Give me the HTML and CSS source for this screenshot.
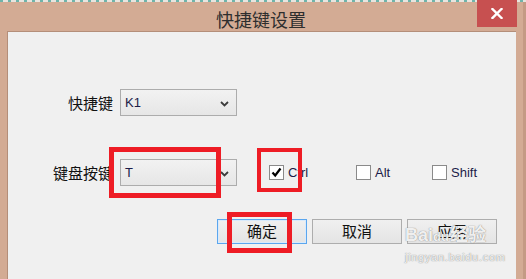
FILE: index.html
```html
<!DOCTYPE html>
<html lang="zh-CN">
<head>
<meta charset="utf-8">
<title>快捷键设置</title>
<link rel="stylesheet" href="styles.css">
</head>
<body>
<div class="window">
  <div class="titlebar">
    <div class="title">快捷键设置</div>
    <div class="close">
      <svg width="12" height="11" viewBox="0 0 12 11"><path d="M1.5 1 L10.5 10 M10.5 1 L1.5 10" stroke="#fff" stroke-width="2.4" stroke-linecap="square"/></svg>
    </div>
  </div>
  <div class="client">
    <div class="row row1">
      <div class="label">快捷键</div>
      <div class="combo"><span class="val">K1</span>
        <svg class="chev" width="9" height="6" viewBox="0 0 9 6"><path d="M1 1 L4.5 4.5 L8 1" fill="none" stroke="#3c3c3c" stroke-width="1.8"/></svg>
      </div>
    </div>
    <div class="row row2">
      <div class="label">键盘按键</div>
      <div class="combo"><span class="val">T</span>
        <svg class="chev" width="9" height="6" viewBox="0 0 9 6"><path d="M1 1 L4.5 4.5 L8 1" fill="none" stroke="#3c3c3c" stroke-width="1.8"/></svg>
      </div>
      <div class="checks">
        <div class="check c-ctrl"><span class="box"><svg width="13" height="13" viewBox="0 0 13 13"><path d="M2.5 6.5 L5.2 9.5 L10.5 2.5" fill="none" stroke="#000" stroke-width="2.2"/></svg></span><span class="ctext">Ctrl</span></div>
        <div class="check c-alt"><span class="box"></span><span class="ctext">Alt</span></div>
        <div class="check"><span class="box"></span><span class="ctext">Shift</span></div>
      </div>
    </div>
    <div class="buttons">
      <div class="btn default">确定</div>
      <div class="btn">取消</div>
      <div class="btn">应用</div>
    </div>
    <div class="mark m1"></div>
    <div class="mark m2"></div>
    <div class="mark m3"></div>
    <div class="watermark">
      <div class="wm1">Bai<span class="paw">du</span>经验</div>
      <div class="wm2">jingyan.baidu.com</div>
    </div>
  </div>
</div>
</body>
</html>
```
FILE: styles.css
```css
html, body {
  margin: 0;
  padding: 0;
}
body {
  width: 526px;
  height: 279px;
  overflow: hidden;
  background: #d3ab94;
  font-family: "Noto Sans CJK SC", "Liberation Sans", sans-serif;
}
.window {
  display: flex;
  flex-direction: column;
  width: 526px;
  height: 279px;
  background: linear-gradient(to left, #c49a84 0, #c49a84 3px, transparent 3px);
}
.titlebar {
  height: 37px;
  display: grid;
  grid-template-columns: 1fr auto 1fr;
  background-image: repeating-linear-gradient(to right, #6fb4aa 0, #6fb4aa 3px, #e9e4df 3px, #e9e4df 8px);
  background-size: 100% 2px;
  background-repeat: no-repeat;
}
.title {
  grid-column: 2;
  align-self: start;
  margin-top: 7px;
  font-size: 18px;
  line-height: 24px;
  color: #2e2e2e;
  margin-left: -4px;
}
.close {
  grid-column: 3;
  justify-self: end;
  align-self: start;
  width: 40px;
  height: 27px;
  margin-right: 9px;
  background: #c75050;
  display: flex;
  align-items: center;
  justify-content: center;
}
.client {
  position: relative;
  margin: 0 10px 0 7px;
  height: 234px;
  border-top: 1px solid #b48e79;
  border-left: 1px solid #b48e79;
  background: #f0f0f0;
  padding-top: 57px;
  box-sizing: content-box;
}
.row {
  display: flex;
  align-items: center;
  height: 27px;
}
.row2 {
  margin-top: 43px;
}
.label {
  width: 105px;
  text-align: right;
  font-size: 15px;
  color: #111;
  margin-right: 7px;
  line-height: 20px;
}
.combo {
  position: relative;
  width: 117px;
  height: 27px;
  box-sizing: border-box;
  border: 1px solid #acacac;
  background: linear-gradient(#f2f2f2, #e6e6e6);
  display: flex;
  align-items: center;
  padding-left: 4px;
}
.val {
  font-family: "Liberation Sans", sans-serif;
  font-size: 13px;
  color: #1c1c48;
}
.chev {
  position: absolute;
  right: 7px;
  top: 11px;
}
.checks {
  display: flex;
  align-items: center;
  margin-left: 32px;
}
.check {
  display: flex;
  align-items: center;
}
.c-ctrl { width: 87px; }
.c-alt { width: 76px; }
.box {
  width: 15px;
  height: 15px;
  box-sizing: border-box;
  border: 1px solid #8a8a8a;
  background: #fff;
  display: flex;
  align-items: center;
  justify-content: center;
  margin-right: 4px;
}
.ctext {
  font-family: "Liberation Sans", sans-serif;
  font-size: 13px;
  color: #1c1c48;
}
.buttons {
  display: flex;
  justify-content: flex-end;
  gap: 5px;
  margin-top: 33px;
  margin-right: 19px;
}
.btn {
  width: 90px;
  height: 25px;
  box-sizing: border-box;
  border: 1px solid #adadad;
  background: linear-gradient(#f0f0f0, #e4e4e4);
  font-size: 15px;
  line-height: 22px;
  text-align: center;
  color: #111;
}
.btn.default {
  border: 1px solid #5ba6ee;
  box-shadow: inset 0 0 0 1px #d8eafc;
}
.mark {
  position: absolute;
  border: 5px solid #ee1c25;
  box-sizing: border-box;
}
.m1 { left: 101px; top: 115px; width: 112px; height: 51px; }
.m2 { left: 249px; top: 116px; width: 45px; height: 44px; border-width: 4px; }
.m3 { left: 219px; top: 180px; width: 65px; height: 41px; }
.watermark {
  position: absolute;
  left: 397px;
  top: 193px;
  color: rgba(255, 255, 255, 0.9);
  text-shadow: 0 0 1px rgba(110, 110, 110, 0.7), 0 0 1px rgba(110, 110, 110, 0.5);
  font-family: "Liberation Sans", "Noto Sans CJK SC", sans-serif;
}
.wm1 {
  font-size: 18px;
  font-weight: bold;
  line-height: 20px;
}
.paw {
  font-size: 13px;
  margin-right: 1px;
}
.wm2 {
  font-size: 11px;
  line-height: 13px;
  letter-spacing: 0.7px;
  margin-top: 4px;
}
```
